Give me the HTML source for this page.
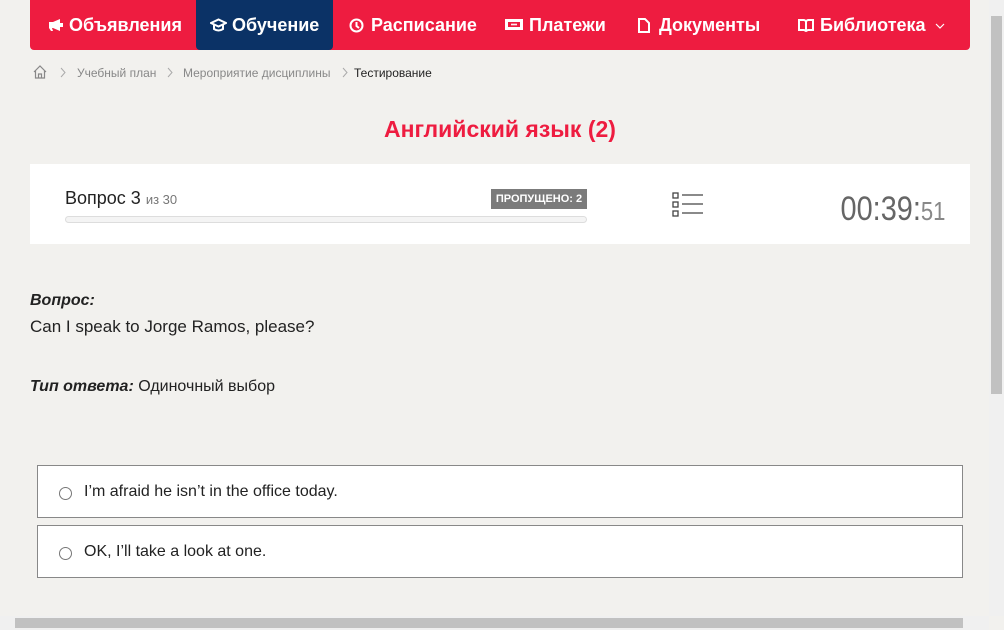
<!DOCTYPE html>
<html><head><meta charset="utf-8"><style>
*{box-sizing:border-box;margin:0;padding:0}
body{width:1004px;height:630px;overflow:hidden;background:#f2f1ee;font-family:"Liberation Sans",sans-serif;position:relative;color:#222}
.nav{position:absolute;left:30px;top:0;width:940px;height:50px;background:#ee1c40;border-radius:0 0 4px 4px}
.nav .it{position:absolute;top:0;height:50px;line-height:50px;color:#fff;font-size:18px;font-weight:bold;white-space:nowrap}
.nav .it svg{position:absolute;top:18px}
.nav .act{background:#0b3266;border-radius:0 0 4px 4px}
.bc{position:absolute;top:66px;font-size:12px;color:#888}
.ch{position:absolute;top:66px}
.card{position:absolute;left:30px;top:164px;width:940px;height:80px;background:#fff}
.opt{position:absolute;left:37px;width:926px;height:53px;border:1px solid #888;background:#fff;font-size:16px;line-height:51px;padding-left:46px}
.opt i{position:absolute;left:21px;top:21px;width:13px;height:13px;border:1px solid #777;border-radius:50%;background:#fff}
.sb{position:absolute;right:0;top:0;width:15px;height:616px;background:#f0f0f0}
</style></head><body>
<div class="nav">
<div class="it" style="left:18px;padding-left:21px"><svg style="left:0" width="15" height="14" viewBox="0 0 15 14" fill="#fff"><path d="M1 4h4l7-3v12l-7-3H4l1 3H3L1 10z"/><rect x="12" y="5" width="3" height="4"/></svg>Объявления</div>
<div class="it act" style="left:166px;width:137px;padding-left:36px"><svg style="left:14px" width="17" height="14" viewBox="0 0 17 14" fill="none" stroke="#fff" stroke-width="2"><path d="M1 5l7.5-3.5L16 5 8.5 8.5z"/><path d="M4 7v4c3 2 6 2 9 0V7"/></svg>Обучение</div>
<div class="it" style="left:319px;padding-left:22px"><svg style="left:0" width="15" height="15" viewBox="0 0 15 15" fill="none" stroke="#fff" stroke-width="2"><circle cx="7.5" cy="7.5" r="6"/><path d="M7.5 4v4l2.5 2"/></svg>Расписание</div>
<div class="it" style="left:475px;padding-left:24px"><svg style="left:0" width="18" height="13" viewBox="0 0 18 13"><rect x="0" y="1" width="18" height="11" fill="#fff"/><rect x="3" y="4" width="12" height="5" fill="#ee1c40"/><circle cx="7" cy="6.5" r="1" fill="#fff"/><circle cx="9" cy="6.5" r="1" fill="#fff"/><circle cx="11" cy="6.5" r="1" fill="#fff"/></svg>Платежи</div>
<div class="it" style="left:608px;padding-left:21px"><svg style="left:0" width="12" height="15" viewBox="0 0 12 15" fill="none" stroke="#fff" stroke-width="2"><path d="M1 1h6l4 4v9H1z"/></svg>Документы</div>
<div class="it" style="left:768px;padding-left:22px"><svg style="left:0" width="16" height="14" viewBox="0 0 16 14" fill="none" stroke="#fff" stroke-width="2"><path d="M1 2h5l2 1 2-1h5v10h-5l-2 1-2-1H1zM8 3v10"/></svg>Библиотека <svg style="position:static;vertical-align:middle;margin-left:4px" width="10" height="6" viewBox="0 0 10 6" fill="none" stroke="#fff" stroke-width="1.2"><path d="M1 1l4 4 4-4"/></svg></div>
</div>
<svg class="ch" style="left:33px;top:65px" width="14" height="14" viewBox="0 0 14 14" fill="none" stroke="#888" stroke-width="1.2"><path d="M1 7L7 1l6 6M2.5 5.5V13h9V5.5M5.5 13V9h3v4"/></svg>
<svg class="ch" style="left:60px;top:67px" width="6" height="11" viewBox="0 0 6 11" fill="none" stroke="#aaa"><path d="M1 1l4 4.5L1 10"/></svg>
<div class="bc" style="left:77px">Учебный план</div>
<svg class="ch" style="left:167px;top:67px" width="6" height="11" viewBox="0 0 6 11" fill="none" stroke="#aaa"><path d="M1 1l4 4.5L1 10"/></svg>
<div class="bc" style="left:183px">Мероприятие дисциплины</div>
<svg class="ch" style="left:342px;top:67px" width="6" height="11" viewBox="0 0 6 11" fill="none" stroke="#aaa"><path d="M1 1l4 4.5L1 10"/></svg>
<div class="bc" style="left:354px;color:#222">Тестирование</div>
<div style="position:absolute;top:116px;left:0;width:1000px;text-align:center;color:#ee1c40;font-size:23px;font-weight:bold">Английский язык (2)</div>
<div class="card">
<div style="position:absolute;left:35px;top:24px;font-size:18px">Вопрос 3 <span style="font-size:13px;color:#777">из 30</span></div>
<div style="position:absolute;left:461px;top:25px;width:96px;height:20px;background:#7b7b7b;color:#fff;font-size:11px;font-weight:bold;line-height:20px;text-align:center">ПРОПУЩЕНО: 2</div>
<div style="position:absolute;left:35px;top:52px;width:522px;height:7px;border:1px solid #ddd;border-radius:4px;background:#f4f4f4"></div>
<svg style="position:absolute;left:642px;top:28px" width="32" height="28" viewBox="0 0 32 28" fill="none" stroke="#444" stroke-width="1.3"><rect x="1" y="1" width="5" height="5"/><rect x="1" y="10" width="5" height="5"/><rect x="1" y="19" width="5" height="5"/><path d="M10 3h21M10 12h21M10 21h21"/></svg>
<div style="position:absolute;right:25px;top:26px;font-size:34px;color:#666;transform:scaleX(0.85);transform-origin:right;font-weight:normal;letter-spacing:0">00:39:<span style="font-size:26px;color:#888">51</span></div>
</div>
<div style="position:absolute;left:30px;top:292px;font-size:16px;font-weight:bold;font-style:italic">Вопрос:</div>
<div style="position:absolute;left:30px;top:317px;font-size:17px">Can I speak to Jorge Ramos, please?</div>
<div style="position:absolute;left:30px;top:378px;font-size:16px"><b><i>Тип ответа:</i></b> Одиночный выбор</div>
<div class="opt" style="top:465px"><i></i>I’m afraid he isn’t in the office today.</div>
<div class="opt" style="top:525px"><i></i>OK, I’ll take a look at one.</div>
<div class="sb"><div style="position:absolute;left:2px;top:16px;width:11px;height:378px;background:#c1c1c1"></div></div>
<div style="position:absolute;left:0;top:616px;width:989px;height:14px;background:#f0f0f0"><div style="position:absolute;left:15px;top:2px;width:948px;height:10px;background:#c1c1c1"></div></div>
</body></html>
